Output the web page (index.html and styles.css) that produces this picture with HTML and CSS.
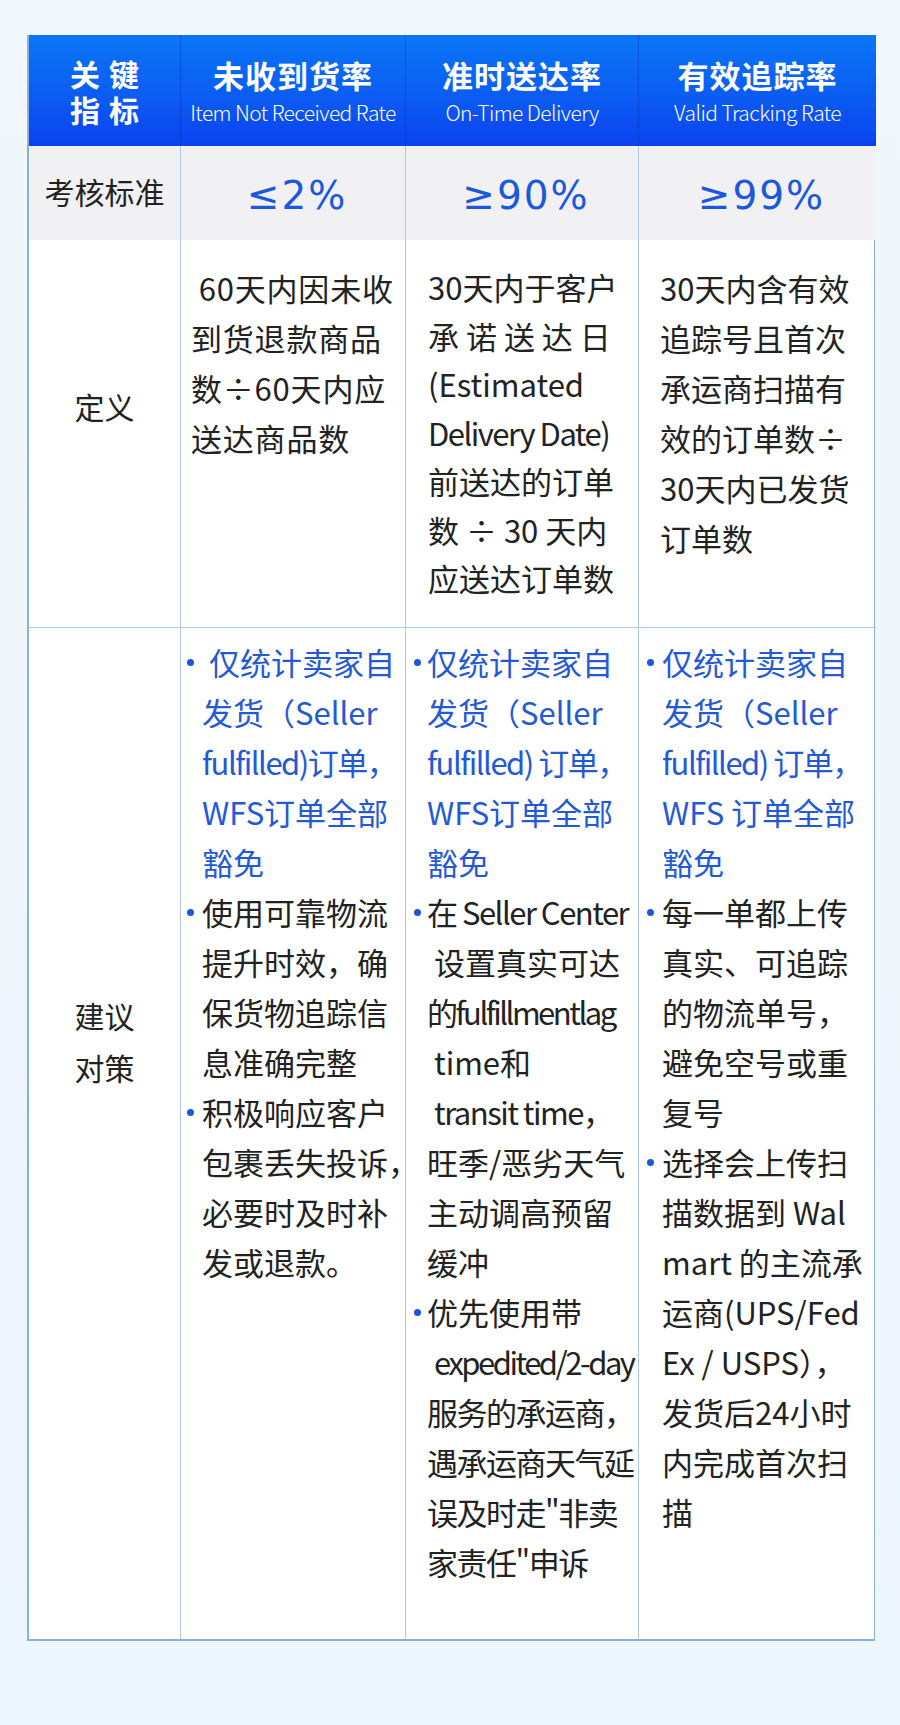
FILE: index.html
```html
<!DOCTYPE html>
<html lang="zh-CN">
<head>
<meta charset="utf-8">
<title>Walmart 物流指标</title>
<link rel="stylesheet" href="styles.css">
</head>
<body>
<div class="page">
  <div class="table">
    <div class="cell head key"><span class="k">关键<br>指标</span></div>
    <div class="cell head"><span class="t">未收到货率</span><span class="s">Item Not Received Rate</span></div>
    <div class="cell head"><span class="t">准时送达率</span><span class="s">On-Time Delivery</span></div>
    <div class="cell head last"><span class="t">有效追踪率</span><span class="s">Valid Tracking Rate</span></div>

    <div class="cell std label">考核标准</div>
    <div class="cell std num">≤2%</div>
    <div class="cell std num">≥90%</div>
    <div class="cell std num last">≥99%</div>

    <div class="cell def label def-label">定义</div>
    <div class="cell def text c2">&nbsp;60天内因未收<br>到货退款商品<br>数÷60天内应<br>送达商品数</div>
    <div class="cell def text c3 tight-rows">30天内于客户<br>承 诺 送 达 日<br>(Estimated<br><span class="cond">Delivery Date)</span><br>前送达的订单<br>数 ÷ 30 天内<br>应送达订单数</div>
    <div class="cell def text c4 last">30天内含有效<br>追踪号且首次<br>承运商扫描有<br>效的订单数÷<br>30天内已发货<br>订单数</div>

    <div class="cell sug label sug-label">建议<br>对策</div>
    <div class="cell sug list c2">
      <div class="item blue"><span class="dot"></span><span class="lines">&nbsp;仅统计卖家自<br>发货（Seller<br><span class="cond">fulfilled)订单，</span><br>WFS订单全部<br>豁免</span></div>
      <div class="item"><span class="dot"></span><span class="lines">使用可靠物流<br>提升时效，确<br>保货物追踪信<br>息准确完整</span></div>
      <div class="item"><span class="dot"></span><span class="lines">积极响应客户<br>包裹丢失投诉，<br>必要时及时补<br>发或退款。</span></div>
    </div>
    <div class="cell sug list c3">
      <div class="item blue"><span class="dot"></span><span class="lines">仅统计卖家自<br>发货（Seller<br><span class="cond">fulfilled) 订单，</span><br>WFS订单全部<br>豁免</span></div>
      <div class="item"><span class="dot"></span><span class="lines"><span class="cond">在 Seller Center</span><br>&nbsp;设置真实可达<br><span class="cond2">的fulfillmentlag</span><br>&nbsp;time和<br>&nbsp;<span class="cond">transit time，</span><br>旺季/恶劣天气<br>主动调高预留<br>缓冲</span></div>
      <div class="item"><span class="dot"></span><span class="lines">优先使用带<br>&nbsp;<span class="cond2">expedited/2-day</span><br><span class="cond">服务的承运商，</span><br><span class="cond">遇承运商天气延</span><br><span class="cond">误及时走"非卖</span><br><span class="cond">家责任"申诉</span></span></div>
    </div>
    <div class="cell sug list c4 last">
      <div class="item blue"><span class="dot"></span><span class="lines">仅统计卖家自<br>发货（Seller<br><span class="cond">fulfilled) 订单，</span><br>WFS 订单全部<br>豁免</span></div>
      <div class="item"><span class="dot"></span><span class="lines">每一单都上传<br>真实、可追踪<br>的物流单号，<br>避免空号或重<br>复号</span></div>
      <div class="item"><span class="dot"></span><span class="lines">选择会上传扫<br>描数据到 Wal<br>mart 的主流承<br>运商(UPS/Fed<br>Ex / USPS），<br>发货后24小时<br>内完成首次扫<br>描</span></div>
    </div>
  </div>
</div>
</body>
</html>
```

FILE: styles.css
```css
* { box-sizing: border-box; }
html, body { margin: 0; padding: 0; }
body {
  background: #eef5fc;
  font-family: "Noto Sans CJK SC", "Noto Sans", sans-serif;
  color: #222;
}
.page {
  width: 900px;
  height: 1725px;
  padding: 35px 0 0 27px;
  background: linear-gradient(180deg, #f1f7fc 0%, #edf5fd 100%);
}
.table {
  display: grid;
  grid-template-columns: 152px 225px 233px 237px;
  grid-template-rows: 111px 94px 388px 1011px;
  width: 848px;
  border-left: 2px solid #8db0da;
  border-right: 1px solid #8db0da;
  border-bottom: 2px solid #8db0da;
  background: #fff;
}
.cell {
  border-right: 1px solid #b2c9e6;
}
.cell.last { border-right: none; }

/* header */
.head {
  background: linear-gradient(180deg, #0a76f6 0%, #0b5cf3 55%, #0c42ef 100%);
  color: #fff;
  border-right: 1px solid rgba(10, 40, 160, 0.35);
  display: flex;
  flex-direction: column;
  align-items: center;
  justify-content: center;
}
.head .t {
  font-size: 31px;
  font-weight: 700;
  line-height: 40px;
  letter-spacing: 1px;
}
.head .s {
  font-size: 21px;
  font-weight: 300;
  line-height: 30px;
  letter-spacing: -0.6px;
  margin-top: 2px;
}
.head .k {
  display: block;
  text-align: center;
  font-size: 30px;
  font-weight: 700;
  line-height: 36px;
  letter-spacing: 9px;
  margin-right: -9px;
}

/* standard row */
.std {
  background: #f1f1f4;
  display: flex;
  align-items: center;
  justify-content: center;
}
.std.label {
  font-size: 30px;
  color: #222;
  padding-bottom: 4px;
}
.num {
  font-family: "DejaVu Sans", "Noto Sans", sans-serif;
  font-size: 39px;
  font-weight: 400;
  color: #1c58de;
  letter-spacing: 2px;
  padding-left: 8px;
  padding-top: 4px;
}

/* definition row */
.def {
  border-bottom: 1px solid #b2c9e6;
}
.label {
  text-align: center;
  font-size: 30px;
}
.def-label {
  padding-top: 141px;
  line-height: 50px;
}
.text {
  font-size: 31px;
  line-height: 50px;
  padding-top: 23px;
  white-space: nowrap;
  color: #222;
}
.text.c2 { padding-left: 10px; letter-spacing: 0.8px; }
.text.c3 { padding-left: 22px; }
.text.c4 { padding-left: 21px; }
.tight-rows { line-height: 48.5px; }

/* suggestion row */
.sug-label {
  padding-top: 361px;
  line-height: 52px;
}
.list {
  padding-top: 9px;
  font-size: 31px;
  line-height: 50px;
  white-space: nowrap;
  color: #222;
}
.item {
  display: flex;
  align-items: flex-start;
}
.item.blue { color: #2459d6; }
.dot {
  flex: none;
  width: 7px;
  height: 7px;
  border-radius: 50%;
  background: #1d55e0;
  margin-top: 22px;
}
.list.c2 { padding-left: 6px; }
.list.c2 .dot { margin-right: 8px; }
.list.c3 { padding-left: 8px; }
.list.c3 .dot { margin-right: 6px; }
.list.c4 { padding-left: 8px; }
.list.c4 .dot { margin-right: 8px; }
.lines { display: block; }
.cond { letter-spacing: -1.5px; }
.cond2 { letter-spacing: -2.5px; }
```
